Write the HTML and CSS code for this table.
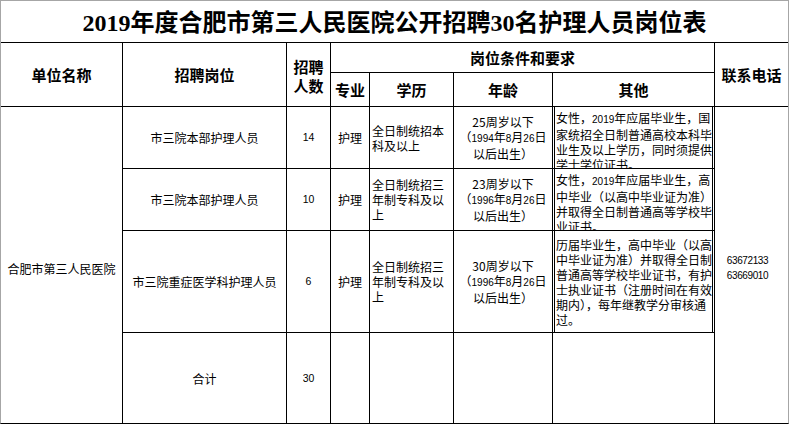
FILE: index.html
```html
<!DOCTYPE html>
<html lang="zh-CN">
<head>
<meta charset="utf-8">
<title>2019年度合肥市第三人民医院公开招聘30名护理人员岗位表</title>
<link rel="stylesheet" href="styles.css">
</head>
<body>
<div class="sheet">
  <div class="cell title"><div>2019年度合肥市第三人民医院公开招聘30名护理人员岗位表</div></div>

  <div class="cell hd rs2"><div>单位名称</div></div>
  <div class="cell hd rs2"><div>招聘岗位</div></div>
  <div class="cell hd rs2 two"><div>招聘<br>人数</div></div>
  <div class="cell hd cs4"><div>岗位条件和要求</div></div>
  <div class="cell hd rs2"><div>联系电话</div></div>
  <div class="cell hd"><div>专业</div></div>
  <div class="cell hd"><div>学历</div></div>
  <div class="cell hd"><div>年龄</div></div>
  <div class="cell hd"><div>其他</div></div>

  <div class="cell rs4 unit"><div>合肥市第三人民医院</div></div>
  <div class="cell"><div>市三院本部护理人员</div></div>
  <div class="cell num"><div>14</div></div>
  <div class="cell"><div>护理</div></div>
  <div class="cell edu"><div>全日制统招本<br>科及以上</div></div>
  <div class="cell"><div>25周岁以下<br>（<span class="n">1994</span>年<span class="n">8</span>月<span class="n">26</span>日<br>以后出生）</div></div>
  <div class="cell other top"><div class="box"><div>女性，<span class="n">2019</span>年应届毕业生，国<br>家统招全日制普通高校本科毕<br>业生及以上学历，同时须提供<br>学士学位证书。</div></div></div>
  <div class="cell rs4 phone"><div>63672133<br>63669010</div></div>

  <div class="cell"><div>市三院本部护理人员</div></div>
  <div class="cell num"><div>10</div></div>
  <div class="cell"><div>护理</div></div>
  <div class="cell edu"><div>全日制统招三<br>年制专科及以<br>上</div></div>
  <div class="cell"><div>23周岁以下<br>（<span class="n">1996</span>年<span class="n">8</span>月<span class="n">26</span>日<br>以后出生）</div></div>
  <div class="cell other top"><div class="box"><div>女性，<span class="n">2019</span>年应届毕业生，高<br>中毕业（以高中毕业证为准）<br>并取得全日制普通高等学校毕<br>业证书。</div></div></div>

  <div class="cell"><div>市三院重症医学科护理人员</div></div>
  <div class="cell num"><div>6</div></div>
  <div class="cell"><div>护理</div></div>
  <div class="cell edu"><div>全日制统招三<br>年制专科及以<br>上</div></div>
  <div class="cell"><div>30周岁以下<br>（<span class="n">1996</span>年<span class="n">8</span>月<span class="n">26</span>日<br>以后出生）</div></div>
  <div class="cell other"><div class="box"><div>历届毕业生，高中毕业（以高<br>中毕业证为准）并取得全日制<br>普通高等学校毕业证书，有护<br>士执业证书（注册时间在有效<br>期内），每年继教学分审核通<br>过。</div></div></div>

  <div class="cell"><div>合计</div></div>
  <div class="cell num"><div>30</div></div>
  <div class="cell"></div>
  <div class="cell"></div>
  <div class="cell"></div>
  <div class="cell"></div>
</div>
</body>
</html>
```

FILE: styles.css
```css
html, body {
  margin: 0;
  padding: 0;
  background: #fff;
}

.sheet {
  width: 789px;
  height: 424px;
  box-sizing: border-box;
  display: grid;
  grid-template-columns: 121px 163px 43px 38px 83px 98px 161px 73px;
  grid-template-rows: 41px 29px 33px 61px 61px 101px 90px;
  gap: 1px;
  background: #000;
  border-top: 1px solid #a6a6a6;
  border-left: 1px solid #a6a6a6;
  border-right: 1px solid #a6a6a6;
  border-bottom: 1px solid #000;
  font-family: "Noto Sans CJK SC", sans-serif;
  font-size: 12px;
  line-height: 15px;
  color: #000;
}

.cell {
  background: #fff;
  display: flex;
  align-items: center;
  justify-content: center;
  text-align: center;
  white-space: nowrap;
  overflow: hidden;
}

.title {
  grid-column: 1 / -1;
  font-family: "Liberation Serif", "Noto Sans CJK SC", serif;
  font-size: 24px;
  font-weight: 700;
  line-height: 30px;
  padding-top: 2px;
  box-sizing: border-box;
}

.hd {
  font-size: 15px;
  font-weight: 700;
  line-height: 19px;
}

.hd.two {
  padding-top: 2px;
}

.rs2 { grid-row: span 2; }
.rs4 { grid-row: span 4; }
.cs4 { grid-column: span 4; }

.unit {
  padding-top: 7px;
  box-sizing: border-box;
}

.n {
  font-family: "Liberation Sans", sans-serif;
  font-size: 10px;
}

.num {
  font-family: "Liberation Sans", sans-serif;
  font-size: 10.5px;
}

.phone {
  font-family: "Liberation Sans", sans-serif;
  font-size: 10px;
  letter-spacing: -0.4px;
  padding-top: 6px;
  padding-right: 8px;
  box-sizing: border-box;
}

.edu {
  justify-content: flex-start;
  text-align: left;
  padding-left: 2px;
}

.other {
  align-items: stretch;
  justify-content: stretch;
  text-align: left;
}

.box {
  flex: 1;
  margin: 0 1px;
  border-left: 1px solid #000;
  border-right: 1px solid #000;
  padding-left: 1px;
  display: flex;
  align-items: center;
}

.other.top .box {
  align-items: flex-start;
  padding-top: 3px;
}
```
